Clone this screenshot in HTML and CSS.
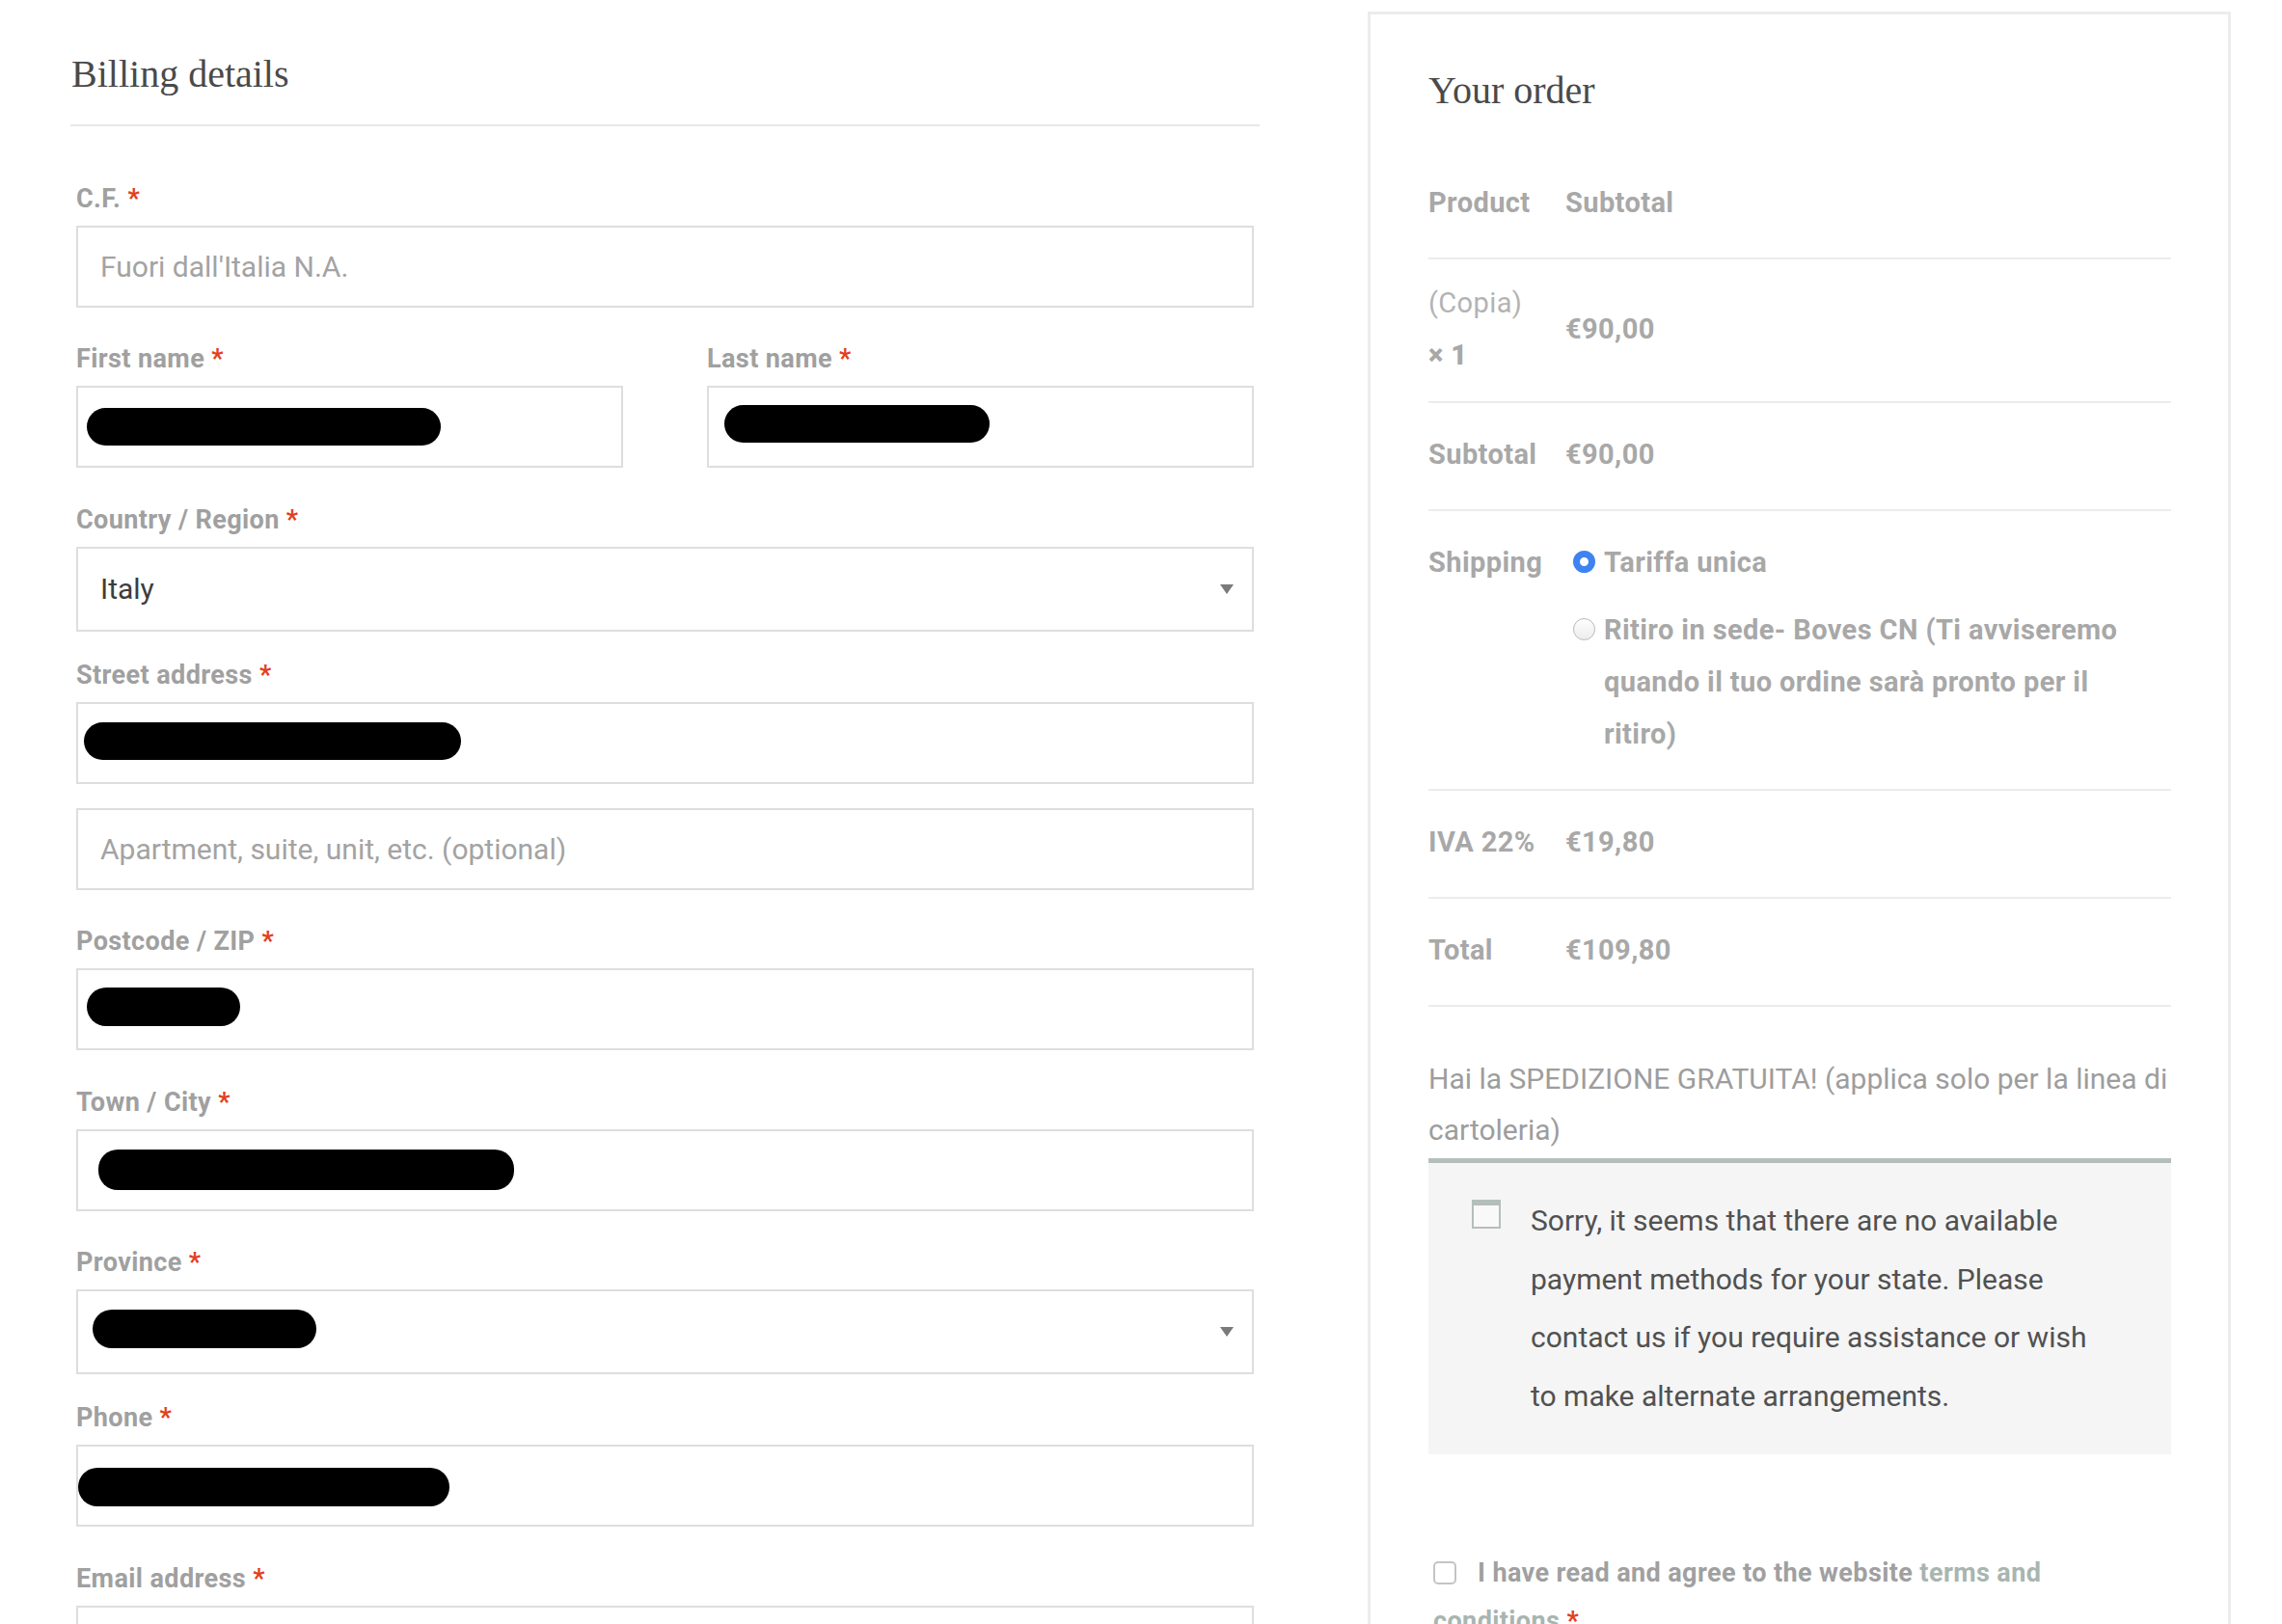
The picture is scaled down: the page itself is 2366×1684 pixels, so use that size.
FILE: index.html
```html
<!DOCTYPE html>
<html lang="en">
<head>
<meta charset="utf-8">
<title>Checkout</title>
<link rel="stylesheet" href="styles.css">
</head>
<body>
<div class="checkout">
  <section class="billing">
    <h3 class="section-title billing-title">Billing details</h3>
    <div class="fields">
      <p class="field">
        <label>C.F. <span class="required">*</span></label>
        <span class="control"><input class="input" type="text" placeholder="Fuori dall'Italia N.A."></span>
      </p>
      <div class="field-row">
        <p class="field">
          <label>First name <span class="required">*</span></label>
          <span class="control"><input class="input" type="text"><span class="redact redact-first"></span></span>
        </p>
        <p class="field">
          <label>Last name <span class="required">*</span></label>
          <span class="control"><input class="input" type="text"><span class="redact redact-last"></span></span>
        </p>
      </div>
      <p class="field field-select">
        <label>Country / Region <span class="required">*</span></label>
        <span class="control control-select"><select class="input select"><option>Italy</option></select></span>
      </p>
      <p class="field">
        <label>Street address <span class="required">*</span></label>
        <span class="control"><input class="input" type="text"><span class="redact redact-street"></span></span>
        <span class="control control-extra"><input class="input" type="text" placeholder="Apartment, suite, unit, etc. (optional)"></span>
      </p>
      <p class="field">
        <label>Postcode / ZIP <span class="required">*</span></label>
        <span class="control"><input class="input" type="text"><span class="redact redact-zip"></span></span>
      </p>
      <p class="field">
        <label>Town / City <span class="required">*</span></label>
        <span class="control"><input class="input" type="text"><span class="redact redact-town"></span></span>
      </p>
      <p class="field field-select">
        <label>Province <span class="required">*</span></label>
        <span class="control control-select"><select class="input select"><option></option></select><span class="redact redact-province"></span></span>
      </p>
      <p class="field">
        <label>Phone <span class="required">*</span></label>
        <span class="control"><input class="input" type="tel"><span class="redact redact-phone"></span></span>
      </p>
      <p class="field">
        <label>Email address <span class="required">*</span></label>
        <span class="control"><input class="input" type="email"></span>
      </p>
    </div>
  </section>

  <aside class="order">
    <h3 class="section-title order-title">Your order</h3>
    <table class="order-table">
      <thead>
        <tr><th class="col-label">Product</th><th>Subtotal</th></tr>
      </thead>
      <tbody>
        <tr class="product-row">
          <td class="col-label"><span class="product-name">(Copia)</span><br><strong>× 1</strong></td>
          <td>€90,00</td>
        </tr>
      </tbody>
      <tfoot>
        <tr><th class="col-label">Subtotal</th><td>€90,00</td></tr>
        <tr>
          <th class="col-label">Shipping</th>
          <td>
            <ul class="ship-methods">
              <li><input type="radio" name="ship" checked><label>Tariffa unica</label></li>
              <li><input type="radio" name="ship"><label>Ritiro in sede- Boves CN (Ti avviseremo quando il tuo ordine sarà pronto per il ritiro)</label></li>
            </ul>
          </td>
        </tr>
        <tr><th class="col-label">IVA 22%</th><td>€19,80</td></tr>
        <tr><th class="col-label">Total</th><td>€109,80</td></tr>
      </tfoot>
    </table>
    <p class="free-ship">Hai la SPEDIZIONE GRATUITA! (applica solo per la linea di cartoleria)</p>
    <div class="payment">
      <svg class="payment-icon" width="30" height="30" viewBox="0 0 30 30" aria-hidden="true">
        <rect x="1" y="1" width="28" height="28" fill="#f9f9f9" stroke="#b4bfba" stroke-width="2"/>
        <rect x="0" y="0" width="30" height="6" fill="#b4bfba"/>
      </svg>
      <p class="payment-text">Sorry, it seems that there are no available payment methods for your state. Please contact us if you require assistance or wish to make alternate arrangements.</p>
    </div>
    <p class="terms"><input type="checkbox"><span>I have read and agree to the website <a href="#">terms and conditions</a>&nbsp;<span class="required">*</span></span></p>
  </aside>
</div>
</body>
</html>
```

FILE: styles.css
```css
* { box-sizing: border-box; }

html, body {
  margin: 0;
  overflow: hidden;
  background: #fff;
}

body {
  font-family: Roboto, "Liberation Sans", sans-serif;
  color: #a0a0a0;
}

.checkout {
  display: flex;
  align-items: flex-start;
  gap: 112px;
  padding-left: 73px;
}

.section-title {
  margin: 0;
  font-family: "Liberation Serif", serif;
  font-weight: 400;
  font-size: 40px;
  line-height: 48px;
  color: #4a4a4a;
}

/* ---------- Billing ---------- */
.billing {
  flex: none;
  width: 1233px;
}

.billing-title {
  margin-top: 53px;
  padding: 0 0 28px 1px;
  border-bottom: 2px solid #e8e8e8;
}

.fields {
  padding: 54px 6px 0;
}

.field {
  margin: 0 0 32.3px;
}

.field label {
  display: block;
  margin-bottom: 7px;
  font-weight: 700;
  font-size: 27px;
  letter-spacing: 0.4px;
  line-height: 42px;
  color: #a0a0a0;
}

.required {
  color: #e2401c;
  font-weight: 700;
}

.field-row {
  display: flex;
  gap: 87px;
}

.field-row .field {
  flex: 1;
}

.control {
  display: block;
  position: relative;
}

.control-extra {
  margin-top: 25px;
}

.input {
  display: block;
  width: 100%;
  height: 85px;
  margin: 0;
  padding: 0 23px;
  border: 2px solid #dedede;
  border-radius: 0;
  background: #fff;
  font-family: Roboto, "Liberation Sans", sans-serif;
  font-size: 30px;
  color: #3d3d3d;
  outline: none;
}

.input::placeholder {
  color: #a3a3a3;
}

.field-select {
  margin-bottom: 24.5px;
}

.select {
  height: 88px;
  -webkit-appearance: none;
  appearance: none;
}

.control-select::after {
  content: "";
  position: absolute;
  right: 21px;
  top: 50%;
  margin-top: -5px;
  border-left: 7px solid transparent;
  border-right: 7px solid transparent;
  border-top: 10px solid #7a7a7a;
}

/* redaction marks laid over the filled values */
.redact {
  position: absolute;
  top: 50%;
  height: 39px;
  margin-top: -20px;
  background: #000;
  border-radius: 20px;
}

.redact-first { left: 11px; width: 367px; }
.redact-last { left: 18px; width: 275px; margin-top: -23px; }
.redact-street { left: 8px; width: 391px; margin-top: -22px; }
.redact-zip { left: 11px; width: 159px; height: 40px; margin-top: -23px; }
.redact-town { left: 23px; width: 431px; height: 42px; margin-top: -21px; }
.redact-province { left: 17px; width: 232px; height: 40px; margin-top: -23px; }
.redact-phone { left: 2px; width: 385px; height: 40px; margin-top: -19px; }

/* ---------- Order ---------- */
.order {
  flex: none;
  width: 895px;
  min-height: 1800px;
  margin-top: 12px;
  padding: 55px 59px 0 60px;
  border: 3px solid #ececec;
}

.order-title {
  margin-bottom: 39px;
}

.order-table {
  width: 100%;
  border-collapse: collapse;
  font-size: 29px;
  letter-spacing: 0.4px;
  line-height: 54px;
  font-weight: 700;
  color: #a8a8a8;
}

.order-table th,
.order-table td {
  padding: 26px 0 30px;
  text-align: left;
  vertical-align: middle;
  border-bottom: 2px solid #ececec;
}

.order-table tfoot th {
  vertical-align: top;
}

.order-table .col-label {
  width: 142px;
}

.order-table .product-row td {
  padding: 18px 0 21px;
}

.product-name {
  font-weight: 400;
  color: #b3b3b3;
}

.ship-methods {
  list-style: none;
  margin: 0;
  padding: 0;
}

.ship-methods li {
  display: flex;
  align-items: flex-start;
  padding-right: 20px;
}

.ship-methods li + li {
  margin-top: 16px;
}

.ship-methods input {
  -webkit-appearance: none;
  appearance: none;
  flex: none;
  width: 23px;
  height: 23px;
  margin: 15px 9px 0 8px;
  border: 1.5px solid #b9b9b9;
  border-radius: 50%;
  background: linear-gradient(#fff, #ececec);
}

.ship-methods input:checked {
  border: 7px solid #3f83f0;
  background: #fff;
}

.free-ship {
  margin: 48px 0 3px;
  font-size: 30px;
  line-height: 53px;
  color: #9d9d9d;
}

.payment {
  display: flex;
  align-items: flex-start;
  gap: 31px;
  padding: 30px 72px 29px 45px;
  background: #f5f5f5;
  border-top: 5px solid #b4bfba;
}

.payment-icon {
  flex: none;
  margin-top: 8px;
}

.payment-text {
  margin: 0;
  font-size: 30px;
  line-height: 60.7px;
  color: #515151;
}

.terms {
  margin: 98px 0 0;
  padding-left: 5px;
  font-size: 27px;
  font-weight: 700;
  letter-spacing: 0.4px;
  line-height: 50px;
  color: #a0a0a0;
}

.terms input {
  -webkit-appearance: none;
  appearance: none;
  width: 24px;
  height: 24px;
  margin: 0 22px 0 0;
  vertical-align: -3px;
  border: 2px solid #c4c4c4;
  border-radius: 5px;
  background: #fff;
}

.terms a {
  color: #a8b5b0;
  text-decoration: none;
}
```
